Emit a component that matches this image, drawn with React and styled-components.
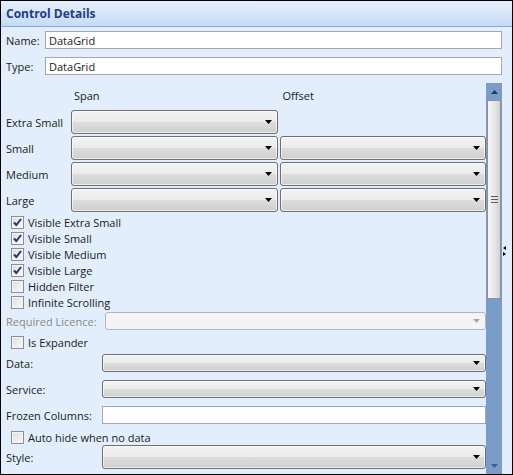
import React from "react";
import styled, { createGlobalStyle } from "styled-components";

const GlobalStyle = createGlobalStyle`
  html, body { margin: 0; padding: 0; background: #fff; }
  body {
    font-family: "Open Sans", "Noto Sans", sans-serif;
    font-size: 11px;
    color: #1b1b1b;
  }
`;

const Window = styled.div`
  width: 513px;
  height: 475px;
  box-sizing: border-box;
  border: 1px solid #000;
  background: #e2eefb;
  display: flex;
  flex-direction: column;
  overflow: hidden;
`;

const Header = styled.div`
  flex: none;
  height: 25px;
  padding-left: 5px;
  display: flex;
  align-items: center;
  background: linear-gradient(#e7f0fc, #c5dbf6);
  border-bottom: 1px solid #86a9dc;
  color: #1e3d87;
  font-weight: bold;
  font-size: 12px;
`;

const Body = styled.div`
  flex: 1;
  min-height: 0;
  display: flex;
`;

const Main = styled.div`
  flex: 1;
  min-width: 0;
  display: flex;
  flex-direction: column;
`;

const Grip = styled.div`
  flex: none;
  width: 9px;
  display: flex;
  align-items: center;
  justify-content: flex-start;
  padding-left: 1px;
`;

const TopRow = styled.div`
  display: flex;
  align-items: center;
  padding-left: 5px;
  margin-top: ${(p) => p.$top}px;
`;

const Label = styled.span`
  flex: none;
  width: ${(p) => p.$width}px;
  color: ${(p) => (p.$disabled ? "#8a8a8a" : "#1b1b1b")};
  white-space: nowrap;
`;

const TextBox = styled.div`
  flex: 1;
  height: 18px;
  box-sizing: border-box;
  border: 1px solid #a5a8ad;
  background: #fff;
  padding-left: 3px;
  display: flex;
  align-items: center;
`;

const ScrollArea = styled.div`
  flex: 1;
  min-height: 0;
  margin-top: 8px;
  display: flex;
`;

const Content = styled.div`
  flex: 1;
  min-width: 0;
  padding-left: 5px;
  display: flex;
  flex-direction: column;
`;

const SizeGrid = styled.div`
  display: grid;
  grid-template-columns: 63px 1fr 1fr;
  column-gap: 2px;
  row-gap: 2px;
  align-items: center;
`;

const ColHead = styled.div`
  height: 25px;
  display: flex;
  align-items: center;
  padding-left: 3px;
`;

const Combo = styled.div`
  height: ${(p) => p.$h || 24}px;
  box-sizing: border-box;
  border: 1px solid ${(p) => (p.$disabled ? "#b3b6b9" : "#707070")};
  border-radius: 3px;
  background: ${(p) =>
    p.$disabled
      ? "#f4f4f4"
      : "linear-gradient(#f3f3f3 0%, #ebebeb 50%, #dddddd 50%, #cfcfcf 100%)"};
  box-shadow: inset 0 0 0 1px ${(p) => (p.$disabled ? "#f4f4f4" : "rgba(255,255,255,0.6)")};
  display: flex;
  align-items: center;
  justify-content: flex-end;
  padding-right: 5px;
  flex: 1;
`;

const Arrow = ({ color = "#000" }) => (
  <svg width="7" height="4" viewBox="0 0 7 4">
    <path d="M0 0H7L3.5 4Z" fill={color} />
  </svg>
);

const Checks = styled.div`
  margin-top: 2px;
  display: flex;
  flex-direction: column;
`;

const CheckRow = styled.div`
  height: 16px;
  display: flex;
  align-items: center;
  padding-left: 5px;
  gap: 4px;
  margin-top: ${(p) => p.$top || 0}px;
`;

const Box = styled.span`
  width: 13px;
  height: 13px;
  box-sizing: border-box;
  border: 1px solid #8e8f8f;
  background: linear-gradient(135deg, #dcdcdc, #fbfbfb);
  box-shadow: inset 0 0 0 1px #f4f4f4;
  display: flex;
  align-items: center;
  justify-content: center;
`;

const CheckBox = ({ checked, children, top }) => (
  <CheckRow $top={top}>
    <Box>
      {checked && (
        <svg width="9" height="9" viewBox="0 0 9 9">
          <path d="M1 4.5L3.3 7L8 1" fill="none" stroke="#22366f" strokeWidth="2" />
        </svg>
      )}
    </Box>
    <span>{children}</span>
  </CheckRow>
);

const FieldRow = styled.div`
  display: flex;
  align-items: center;
  margin-top: ${(p) => p.$top}px;
`;

const ScrollBar = styled.div`
  flex: none;
  width: 16px;
  background: #7b9bc8;
  display: flex;
  flex-direction: column;
`;

const ScrollButton = styled.div`
  height: 17px;
  display: flex;
  align-items: center;
  justify-content: center;
  margin-top: ${(p) => (p.$bottom ? "auto" : "0")};
`;

const Thumb = styled.div`
  height: 199px;
  margin: 0 1px;
  box-sizing: border-box;
  border: 1px solid #8d9298;
  border-radius: 1px;
  background: linear-gradient(90deg, #f6f6f6, #e6e6e6 60%, #d2d2d2);
  display: flex;
  align-items: center;
  justify-content: center;
`;

const Lines = () => (
  <svg width="7" height="7" viewBox="0 0 7 7">
    <path d="M0 0.5H7M0 3.5H7M0 6.5H7" stroke="#5d5d5d" strokeWidth="1" />
  </svg>
);

const sizes = ["Extra Small", "Small", "Medium", "Large"];

export default function App() {
  return (
    <>
      <GlobalStyle />
      <Window>
        <Header>Control Details</Header>
        <Body>
          <Main>
            <TopRow $top={4}>
              <Label $width={39}>Name:</Label>
              <TextBox>DataGrid</TextBox>
            </TopRow>
            <TopRow $top={8}>
              <Label $width={39}>Type:</Label>
              <TextBox>DataGrid</TextBox>
            </TopRow>
            <ScrollArea>
              <Content>
                <SizeGrid>
                  <span />
                  <ColHead>Span</ColHead>
                  <ColHead>Offset</ColHead>
                  {sizes.map((s, i) => (
                    <React.Fragment key={s}>
                      <span>{s}</span>
                      <Combo>
                        <Arrow />
                      </Combo>
                      {i === 0 ? (
                        <span />
                      ) : (
                        <Combo>
                          <Arrow />
                        </Combo>
                      )}
                    </React.Fragment>
                  ))}
                </SizeGrid>
                <Checks>
                  <CheckBox checked>Visible Extra Small</CheckBox>
                  <CheckBox checked>Visible Small</CheckBox>
                  <CheckBox checked>Visible Medium</CheckBox>
                  <CheckBox checked>Visible Large</CheckBox>
                  <CheckBox>Hidden Filter</CheckBox>
                  <CheckBox>Infinite Scrolling</CheckBox>
                </Checks>
                <FieldRow $top={2}>
                  <Label $width={99} $disabled>
                    Required Licence:
                  </Label>
                  <Combo $h={18} $disabled>
                    <Arrow color="#a8a8a8" />
                  </Combo>
                </FieldRow>
                <CheckBox top={4}>Is Expander</CheckBox>
                <FieldRow $top={4}>
                  <Label $width={96}>Data:</Label>
                  <Combo $h={18}>
                    <Arrow />
                  </Combo>
                </FieldRow>
                <FieldRow $top={8}>
                  <Label $width={96}>Service:</Label>
                  <Combo $h={18}>
                    <Arrow />
                  </Combo>
                </FieldRow>
                <FieldRow $top={8}>
                  <Label $width={96}>Frozen Columns:</Label>
                  <TextBox />
                </FieldRow>
                <CheckBox top={5}>Auto hide when no data</CheckBox>
                <FieldRow $top={0}>
                  <Label $width={96}>Style:</Label>
                  <Combo>
                    <Arrow />
                  </Combo>
                </FieldRow>
              </Content>
              <ScrollBar>
                <ScrollButton>
                  <svg width="7" height="4" viewBox="0 0 7 4">
                    <path d="M0 4H7L3.5 0Z" fill="#1f3a66" />
                  </svg>
                </ScrollButton>
                <Thumb>
                  <Lines />
                </Thumb>
                <ScrollButton $bottom>
                  <Arrow color="#3d5f92" />
                </ScrollButton>
              </ScrollBar>
            </ScrollArea>
          </Main>
          <Grip>
            <svg width="4" height="10" viewBox="0 0 4 10">
              <path d="M3 0V4L0 2Z M0 6V10L3 8Z" fill="#000" />
            </svg>
          </Grip>
        </Body>
      </Window>
    </>
  );
}
